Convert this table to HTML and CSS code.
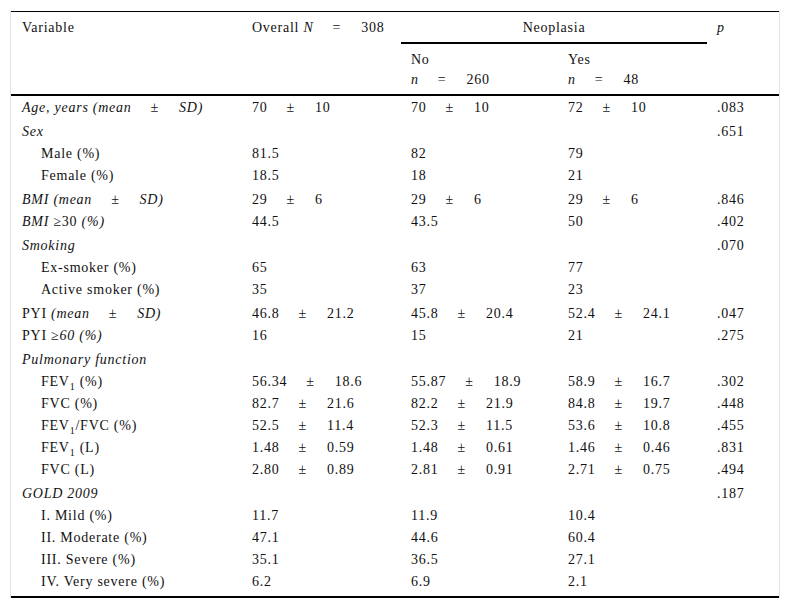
FILE: index.html
```html
<!DOCTYPE html>
<html>
<head>
<meta charset="utf-8">
<link rel="stylesheet" href="styles.css">
</head>
<body>
<div class="wrap">
<table class="tbl">
<colgroup><col class="c1"><col class="c2"><col class="c3"><col class="c4"><col class="c5"></colgroup>
<thead>
<tr>
<th rowspan="2" class="hv first">Variable</th>
<th rowspan="2" class="hv">Overall <i>N</i><span class="op">=</span>308</th>
<th colspan="2" class="neo">Neoplasia</th>
<th rowspan="2" class="hv"><i>p</i></th>
</tr>
<tr>
<th class="sub">No<br><i>n</i><span class="op">=</span>260</th>
<th class="sub">Yes<br><i>n</i><span class="op">=</span>48</th>
</tr>
</thead>
<tbody>
<tr><td class="first"><i>Age, years (mean<span class="op">±</span>SD)</i></td><td>70<span class="op">±</span>10</td><td>70<span class="op">±</span>10</td><td>72<span class="op">±</span>10</td><td>.083</td></tr>
<tr class="gap"><td class="first"><i>Sex</i></td><td></td><td></td><td></td><td>.651</td></tr>
<tr><td class="ind">Male (%)</td><td>81.5</td><td>82</td><td>79</td><td></td></tr>
<tr><td class="ind">Female (%)</td><td>18.5</td><td>18</td><td>21</td><td></td></tr>
<tr class="gap"><td class="first"><i>BMI (mean<span class="op">±</span>SD)</i></td><td>29<span class="op">±</span>6</td><td>29<span class="op">±</span>6</td><td>29<span class="op">±</span>6</td><td>.846</td></tr>
<tr><td class="first"><i>BMI</i> ≥30 <i>(%)</i></td><td>44.5</td><td>43.5</td><td>50</td><td>.402</td></tr>
<tr class="gap"><td class="first"><i>Smoking</i></td><td></td><td></td><td></td><td>.070</td></tr>
<tr><td class="ind">Ex-smoker (%)</td><td>65</td><td>63</td><td>77</td><td></td></tr>
<tr><td class="ind">Active smoker (%)</td><td>35</td><td>37</td><td>23</td><td></td></tr>
<tr class="gap"><td class="first">PYI <i>(mean<span class="op">±</span>SD)</i></td><td>46.8<span class="op">±</span>21.2</td><td>45.8<span class="op">±</span>20.4</td><td>52.4<span class="op">±</span>24.1</td><td>.047</td></tr>
<tr><td class="first">PYI ≥<i>60 (%)</i></td><td>16</td><td>15</td><td>21</td><td>.275</td></tr>
<tr class="gap"><td class="first"><i>Pulmonary function</i></td><td></td><td></td><td></td><td></td></tr>
<tr><td class="ind">FEV<sub>1</sub> (%)</td><td>56.34<span class="op">±</span>18.6</td><td>55.87<span class="op">±</span>18.9</td><td>58.9<span class="op">±</span>16.7</td><td>.302</td></tr>
<tr><td class="ind">FVC (%)</td><td>82.7<span class="op">±</span>21.6</td><td>82.2<span class="op">±</span>21.9</td><td>84.8<span class="op">±</span>19.7</td><td>.448</td></tr>
<tr><td class="ind">FEV<sub>1</sub>/FVC (%)</td><td>52.5<span class="op">±</span>11.4</td><td>52.3<span class="op">±</span>11.5</td><td>53.6<span class="op">±</span>10.8</td><td>.455</td></tr>
<tr><td class="ind">FEV<sub>1</sub> (L)</td><td>1.48<span class="op">±</span>0.59</td><td>1.48<span class="op">±</span>0.61</td><td>1.46<span class="op">±</span>0.46</td><td>.831</td></tr>
<tr><td class="ind">FVC (L)</td><td>2.80<span class="op">±</span>0.89</td><td>2.81<span class="op">±</span>0.91</td><td>2.71<span class="op">±</span>0.75</td><td>.494</td></tr>
<tr class="gap"><td class="first"><i>GOLD 2009</i></td><td></td><td></td><td></td><td>.187</td></tr>
<tr><td class="ind">I. Mild (%)</td><td>11.7</td><td>11.9</td><td>10.4</td><td></td></tr>
<tr><td class="ind">II. Moderate (%)</td><td>47.1</td><td>44.6</td><td>60.4</td><td></td></tr>
<tr><td class="ind">III. Severe (%)</td><td>35.1</td><td>36.5</td><td>27.1</td><td></td></tr>
<tr class="last"><td class="ind">IV. Very severe (%)</td><td>6.2</td><td>6.9</td><td>2.1</td><td></td></tr>
</tbody>
</table>
</div>
</body>
</html>
```

FILE: styles.css
```css
html, body {
  margin: 0;
  padding: 0;
  background: #fff;
}
body {
  padding: 11px 0 0 10px;
}
.wrap {
  width: 768px;
  border-left: 1px solid #e2e2e2;
  border-right: 1px solid #e2e2e2;
}
.tbl {
  width: 768px;
  table-layout: fixed;
  border-collapse: separate;
  border-spacing: 0;
  border-top: 1px solid #000;
  border-bottom: 2px solid #000;
  font-family: "Liberation Serif", "Times New Roman", serif;
  font-size: 14px;
  letter-spacing: 0.75px;
  color: #111;
}
.c1 { width: 231px; }
.c2 { width: 159px; }
.c3 { width: 157px; }
.c4 { width: 149px; }
.c5 { width: 72px; }
th {
  font-weight: normal;
  text-align: left;
  vertical-align: top;
  padding: 8px 10px 6px;
  line-height: 16px;
}
th.hv {
  border-bottom: 2px solid #000;
}
th.neo {
  text-align: center;
  border-bottom: 2px solid #000;
}
th.sub {
  line-height: 20px;
  padding-top: 6px;
  padding-bottom: 4px;
  border-bottom: 2px solid #000;
}
td {
  padding: 4px 10px 2px;
  line-height: 16px;
  vertical-align: top;
  white-space: nowrap;
}
.first {
  padding-left: 11px;
}
td.ind {
  padding-left: 30px;
}
tr.gap td {
  padding-top: 6px;
}
tr.last td {
  padding-bottom: 6px;
}
.op {
  display: inline-block;
  margin: 0 20px 0 19px;
}
sub {
  font-size: 10px;
  line-height: 0;
  vertical-align: -4px;
}
```
